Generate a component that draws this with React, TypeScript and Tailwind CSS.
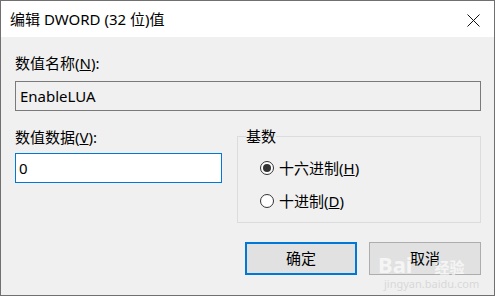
const font = "font-['Noto_Sans','Noto_Sans_CJK_SC',sans-serif]";

const Radio = ({ checked, label, hot }: { checked?: boolean; label: string; hot: string }) => (
  <div className="flex h-[20px] items-center">
    <span className="flex h-[14px] w-[14px] items-center justify-center rounded-full border border-[#333333] bg-white">
      {checked && <span className="h-[8px] w-[8px] rounded-full bg-[#333333]" />}
    </span>
    <span className="ml-[5px] text-[15px] leading-[20px] text-black">
      {label}(<u>{hot}</u>)
    </span>
  </div>
);

export default function App() {
  return (
    <div className={`${font} h-[296px] w-[495px] border border-[#707070] bg-[#f0f0f0] text-black`}>
      {/* title bar */}
      <div className="flex h-[36px] items-center justify-between bg-white pl-[9px] pr-[14px]">
        <span className="text-[15px] leading-[20px]">编辑 DWORD (32 位)值</span>
        <svg width="13" height="13" viewBox="0 0 13 13" className="mt-[2px]">
          <path d="M0.5 0.5 L12.5 12.5 M12.5 0.5 L0.5 12.5" stroke="#111" strokeWidth="1" />
        </svg>
      </div>

      <div className="pl-[14px] pr-[13px] pt-[16px]">
        <div className="text-[15px] leading-[20px]">
          数值名称(<u>N</u>):
        </div>
        <div className="mt-[8px] flex h-[30px] items-center border border-[#7a7a7a] bg-[#f0f0f0] pl-[4px] text-[15px]">
          EnableLUA
        </div>

        <div className="mt-[15px] flex gap-[15px]">
          <div className="w-[207px] shrink-0">
            <div className="pt-[1px] text-[15px] leading-[20px]">
              数值数据(<u>V</u>):
            </div>
            <div className="mt-[6px] flex h-[30px] items-center border border-[#0078d7] bg-white pl-[3px] text-[15px]">
              0
            </div>
          </div>

          <fieldset className="m-0 h-[97px] flex-1 border border-[#dcdcdc] px-[8px] pb-[10px] pt-0">
            <legend className="p-0 text-[15px] leading-[20px]">基数</legend>
            <div className="flex flex-col gap-[13px] pl-[14px] pt-[12px]">
              <Radio checked label="十六进制" hot="H" />
              <Radio label="十进制" hot="D" />
            </div>
          </fieldset>
        </div>

        <div className="mt-[19px] flex justify-end gap-[12px]">
          <button className="flex h-[33px] w-[112px] items-center justify-center border-2 border-[#0078d7] bg-[#e1e1e1] text-[15px]">
            确定
          </button>
          <button className="relative flex h-[33px] w-[112px] items-center justify-center overflow-visible border border-[#adadad] bg-[#e1e1e1] text-[15px]">
            取消
            {/* watermark from the screenshot source */}
            <span
              aria-hidden
              className="pointer-events-none absolute left-[8px] top-[11px] text-[22px] font-bold leading-[20px] text-white/70"
            >
              Bai<span className="ml-[22px] text-[15px]">经验</span>
            </span>
            <span
              aria-hidden
              className="pointer-events-none absolute left-[14px] top-[35px] text-[11px] leading-[12px] text-[#d8d8d8]"
            >
              jingyan.baidu.com
            </span>
          </button>
        </div>
      </div>
    </div>
  );
}
